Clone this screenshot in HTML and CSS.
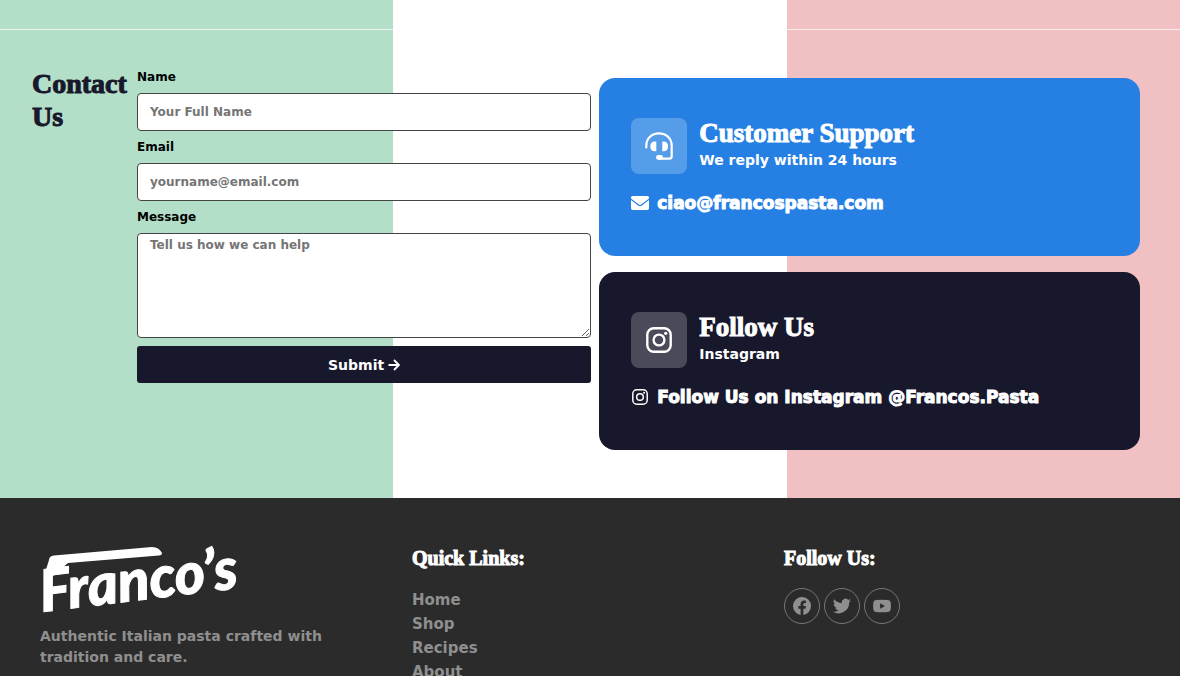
FILE: index.html
```
<!DOCTYPE html>
<html lang="en">
<head>
    <meta charset="UTF-8">
    <meta name="viewport" content="width=device-width, initial-scale=1.0">
    <title>Franco's Pasta - Contact</title>
    <link rel="stylesheet" href="styles.css">
</head>
<body>

<!-- shared icons -->
<svg class="sprite" aria-hidden="true">
    <symbol id="instagram" viewBox="0 0 24 24">
        <rect x="1.2" y="1.2" width="21.6" height="21.6" rx="6" fill="none" stroke="currentColor" stroke-width="2.2"/>
        <circle cx="12" cy="12" r="5" fill="none" stroke="currentColor" stroke-width="2.2"/>
        <circle cx="18.2" cy="5.8" r="1.5" fill="currentColor"/>
    </symbol>
</svg>

<main class="flag">
    <div class="divider"></div>
    <section class="contact">
        <h2>Contact Us</h2>

        <form class="contact-form">
            <label for="name">Name</label>
            <input type="text" id="name" placeholder="Your Full Name" required>
            <label for="email">Email</label>
            <input type="email" id="email" placeholder="yourname@email.com" required>
            <label for="message">Message</label>
            <textarea id="message" placeholder="Tell us how we can help"></textarea>
            <button type="submit">Submit
                <svg width="12" height="12" viewBox="0 0 12 12" fill="none" stroke="currentColor" stroke-width="1.8">
                    <path d="M0.5 6H11M6 1L11 6L6 11"/>
                </svg>
            </button>
        </form>

        <div class="cards">
            <div class="card support">
                <div class="card-head">
                    <div class="card-icon">
                        <svg width="28" height="28" viewBox="0 0 28 28" fill="none" stroke="currentColor" stroke-width="2.2">
                            <path d="M1.3 15.5V13.5C1.3 6.3 6.8 1.3 14 1.3S26.7 6.3 26.7 13.5V24.2Q26.7 26.7 24.2 26.7H14" stroke-linecap="round"/>
                            <path d="M11.3 9.5V19.3H9.8C6.8 19.3 5.3 17.5 5.3 14.4S6.8 9.5 9.8 9.5ZM17.3 9.5V19.3H18.5C21.500 19.3 23 17.5 23 14.4S21.500 9.5 18.5 9.5Z" fill="currentColor" stroke="none"/>
                            <rect x="11" y="23" width="7" height="4.8" rx="2.4" fill="currentColor" stroke="none"/>
                        </svg>
                    </div>
                    <div>
                        <h3>Customer Support</h3>
                        <p>We reply within 24 hours</p>
                    </div>
                </div>
                <a class="card-link" href="mailto:ciao@francospasta.com">
                    <svg width="18" height="14" viewBox="0 0 18 14" fill="currentColor">
                        <path d="M1.5 0H16.5Q18 0 18 1.5V2.6L10.3 8.6Q9 9.5 7.7 8.6L0 2.6V1.5Q0 0 1.5 0Z"/>
                        <path d="M0 4L7 9.5Q9 10.9 11 9.5L18 4V12.3Q18 14 16.3 14H1.7Q0 14 0 12.3Z"/>
                    </svg>
                    ciao@francospasta.com
                </a>
            </div>

            <div class="card social">
                <div class="card-head">
                    <div class="card-icon">
                        <svg width="26" height="26"><use href="#instagram"/></svg>
                    </div>
                    <div>
                        <h3>Follow Us</h3>
                        <p>Instagram</p>
                    </div>
                </div>
                <a class="card-link" href="#">
                    <svg width="18" height="16" viewBox="0 0 18 16"><use href="#instagram"/></svg>
                    Follow Us on Instagram @Francos.Pasta
                </a>
            </div>
        </div>
    </section>
</main>

<footer class="footer">
    <div>
        <svg class="logo" width="200" height="66" viewBox="0 0 200 66" role="img" aria-label="Franco's">
            <path d="M9 14Q9 10 14 9.500L112 1Q119 1 122 7Q122 9 119 9.500L28 17L13 30L4 30Z"/>
            <text x="2" y="66" transform="rotate(-7 2 66)">Franco’s</text>
        </svg>
        <p class="about">Authentic Italian pasta crafted with tradition and care.</p>
    </div>
    <div>
        <h4>Quick Links:</h4>
        <ul class="links">
            <li><a href="#">Home</a></li>
            <li><a href="#">Shop</a></li>
            <li><a href="#">Recipes</a></li>
            <li><a href="#">About</a></li>
        </ul>
    </div>
    <div>
        <h4>Follow Us:</h4>
        <div class="socials">
            <a href="#" aria-label="Facebook">
                <svg width="18" height="18" viewBox="0 0 24 24"><path d="M24 12a12 12 0 1 0-13.900 11.900v-8.400H7.100V12h3V9.400c0-3 1.800-4.700 4.500-4.700 1.300 0 2.700.2 2.700.2v3h-1.500c-1.500 0-2 .9-2 1.900V12h3.400l-.5 3.500h-2.900v8.400A12 12 0 0 0 24 12z"/></svg>
            </a>
            <a href="#" aria-label="Twitter">
                <svg width="18" height="18" viewBox="0 0 24 24"><path d="M24 4.600a10 10 0 0 1-2.800.8 5 5 0 0 0 2.100-2.700 10 10 0 0 1-3.100 1.200 4.900 4.900 0 0 0-8.400 4.500A14 14 0 0 1 1.700 3.100a4.900 4.900 0 0 0 1.500 6.600 5 5 0 0 1-2.200-.6 4.900 4.900 0 0 0 3.900 4.900 5 5 0 0 1-2.200.1 4.900 4.900 0 0 0 4.600 3.400A10 10 0 0 1 0 19.500 14 14 0 0 0 21.500 7.100 10 10 0 0 0 24 4.600z"/></svg>
            </a>
            <a href="#" aria-label="YouTube">
                <svg width="18" height="18" viewBox="0 0 24 24"><path fill-rule="evenodd" d="M4 4Q12 3.200 20 4Q23 4.300 23.500 7Q24.200 12 23.500 17Q23 19.700 20 20Q12 20.800 4 20Q1 19.700.5 17Q-.2 12 .5 7Q1 4.300 4 4ZM9.500 8.300V15.700L16 12Z"/></svg>
            </a>
        </div>
    </div>
</footer>

</body>
</html>
```
FILE: styles.css
```
* {
    box-sizing: border-box;
}
body {
    margin: 0;
    font-family: 'DejaVu Sans', sans-serif;
    font-weight: bold;
    color: #000;
}
h2, h3, h4 {
    margin: 0;
    font-family: 'Liberation Serif', serif;
    font-weight: bold;
    -webkit-text-stroke: 1px currentColor;
}
p {
    margin: 0;
}
a {
    color: inherit;
    text-decoration: none;
}
.sprite {
    display: none;
}
.flag {
    background: linear-gradient(to right, #b3dfc8 33.333%, #fff 33.333%, #fff 66.666%, #f0c0c3 66.666%);
}
.divider {
    height: 30px;
    border-bottom: 1px solid rgba(255, 255, 255, 0.7);
}

/* contact */
.contact {
    display: grid;
    grid-template-columns: 97px 21fr 25fr;
    gap: 8px;
    align-items: start;
    padding: 37px 40px 48px 32px;
}
.contact h2 {
    font-size: 28px;
    line-height: 33px;
    color: #18182d;
}
.contact-form {
    display: flex;
    flex-direction: column;
    gap: 6px;
}
label {
    font-size: 12px;
    line-height: 20px;
}
input, textarea {
    width: 100%;
    height: 38px;
    margin: 0;
    padding: 0 12px;
    border: 1px solid #444;
    border-radius: 4px;
    background: #fff;
    font: inherit;
    font-size: 12px;
}
textarea {
    height: 105px;
    padding: 4px 12px;
    resize: vertical;
}
::placeholder {
    color: #757575;
}
button {
    display: flex;
    justify-content: center;
    align-items: center;
    gap: 4px;
    height: 37px;
    margin-top: 2px;
    border: none;
    border-radius: 3px;
    background: #18182d;
    color: #fff;
    font: inherit;
    font-size: 14px;
    cursor: pointer;
}

/* cards */
.cards {
    display: grid;
    gap: 16px;
    padding-top: 11px;
}
.card {
    padding: 40px 32px;
    border-radius: 16px;
    color: #fff;
}
.support {
    background: #2680e3;
}
.social {
    background: #18182d;
}
.card-head {
    display: flex;
    align-items: center;
    gap: 12px;
    margin-bottom: 16px;
}
.card-icon {
    display: flex;
    justify-content: center;
    align-items: center;
    width: 56px;
    height: 56px;
    border-radius: 8px;
    background: rgba(255, 255, 255, 0.22);
}
.card h3 {
    font-size: 27px;
    line-height: 28px;
}
.card p {
    font-size: 14px;
    line-height: 26px;
}
.card-link {
    display: flex;
    align-items: center;
    gap: 8px;
    font-size: 17px;
    line-height: 26px;
    -webkit-text-stroke: 1px currentColor;
}

/* footer */
.footer {
    display: grid;
    grid-template-columns: repeat(3, 1fr);
    gap: 16px;
    padding: 48px 40px;
    background: #2b2b2b;
    color: #8f8f8f;
}
.logo {
    display: block;
    margin-bottom: 14px;
    fill: #fff;
    overflow: visible;
}
.logo text {
    font-family: 'Lato', sans-serif;
    font-size: 58px;
    font-style: italic;
    font-weight: 900;
    stroke: #fff;
    stroke-width: 1px;
}
.about {
    max-width: 300px;
    font-size: 14px;
    line-height: 21px;
}
.footer h4 {
    margin-bottom: 18px;
    font-size: 20px;
    line-height: 24px;
    color: #fff;
}
.links {
    margin: 0;
    padding: 0;
    list-style: none;
    font-size: 15px;
    line-height: 24px;
}
.socials {
    display: flex;
    gap: 4px;
}
.socials a {
    display: flex;
    justify-content: center;
    align-items: center;
    width: 36px;
    height: 36px;
    border: 1px solid #777;
    border-radius: 50%;
    fill: #8f8f8f;
}
```
